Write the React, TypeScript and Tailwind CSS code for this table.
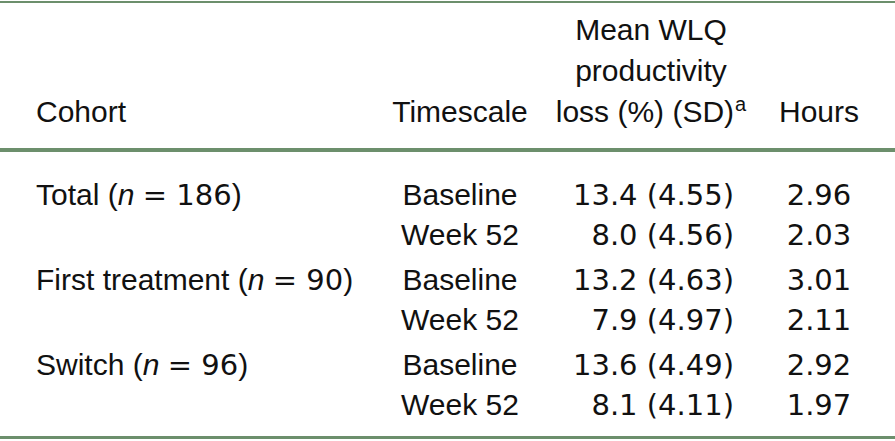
import React from 'react';

interface Group {
  cohort: string;
  n: string;
  rows: [string, string, string][];
}

const groups: Group[] = [
  {
    cohort: 'Total',
    n: '186',
    rows: [
      ['Baseline', '13.4 (4.55)', '2.96'],
      ['Week 52', '8.0 (4.56)', '2.03'],
    ],
  },
  {
    cohort: 'First treatment',
    n: '90',
    rows: [
      ['Baseline', '13.2 (4.63)', '3.01'],
      ['Week 52', '7.9 (4.97)', '2.11'],
    ],
  },
  {
    cohort: 'Switch',
    n: '96',
    rows: [
      ['Baseline', '13.6 (4.49)', '2.92'],
      ['Week 52', '8.1 (4.11)', '1.97'],
    ],
  },
];

const cols = 'grid grid-cols-[390px_140px_242px_94px]';
const num = "font-['DejaVu_Sans',sans-serif] text-[29px]";

const App: React.FC = () => {
  return (
    <div className="w-[895px] h-[441px] bg-white pt-px text-[30px] text-[#111] font-['Liberation_Sans',Arial,sans-serif]">
      {/* header */}
      <div className="border-t-2 border-b-4 border-[#6c8f6c] pt-[6px] pb-[16px]">
        <div className={`${cols} items-end leading-[41px]`}>
          <div className="pl-[36px]">Cohort</div>
          <div className="text-center">Timescale</div>
          <div className="text-center">
            Mean WLQ
            <br />
            productivity
            <br />
            loss (%) (SD)
            <sup className="text-[20px] top-[-11px] ml-px">a</sup>
          </div>
          <div className="text-center">Hours</div>
        </div>
      </div>

      {/* body */}
      <div className="border-b-[3px] border-[#6c8f6c] pt-[23px] pb-[11px] flex flex-col gap-[5px]">
        {groups.map(g => (
          <div key={g.cohort} className="flex flex-col">
            {g.rows.map((r, i) => (
              <div key={r[0]} className={`${cols} leading-[40px]`}>
                <div className="pl-[36px] whitespace-nowrap">
                  {i === 0 && (
                    <>
                      {g.cohort} (<span className="italic">n</span>{' '}
                      <span className={num}>= {g.n}</span>)
                    </>
                  )}
                </div>
                <div className="text-center">{r[0]}</div>
                <div className={`text-right pr-[38px] ${num}`}>{r[1]}</div>
                <div className={`text-center ${num}`}>{r[2]}</div>
              </div>
            ))}
          </div>
        ))}
      </div>
    </div>
  );
};

export default App;
